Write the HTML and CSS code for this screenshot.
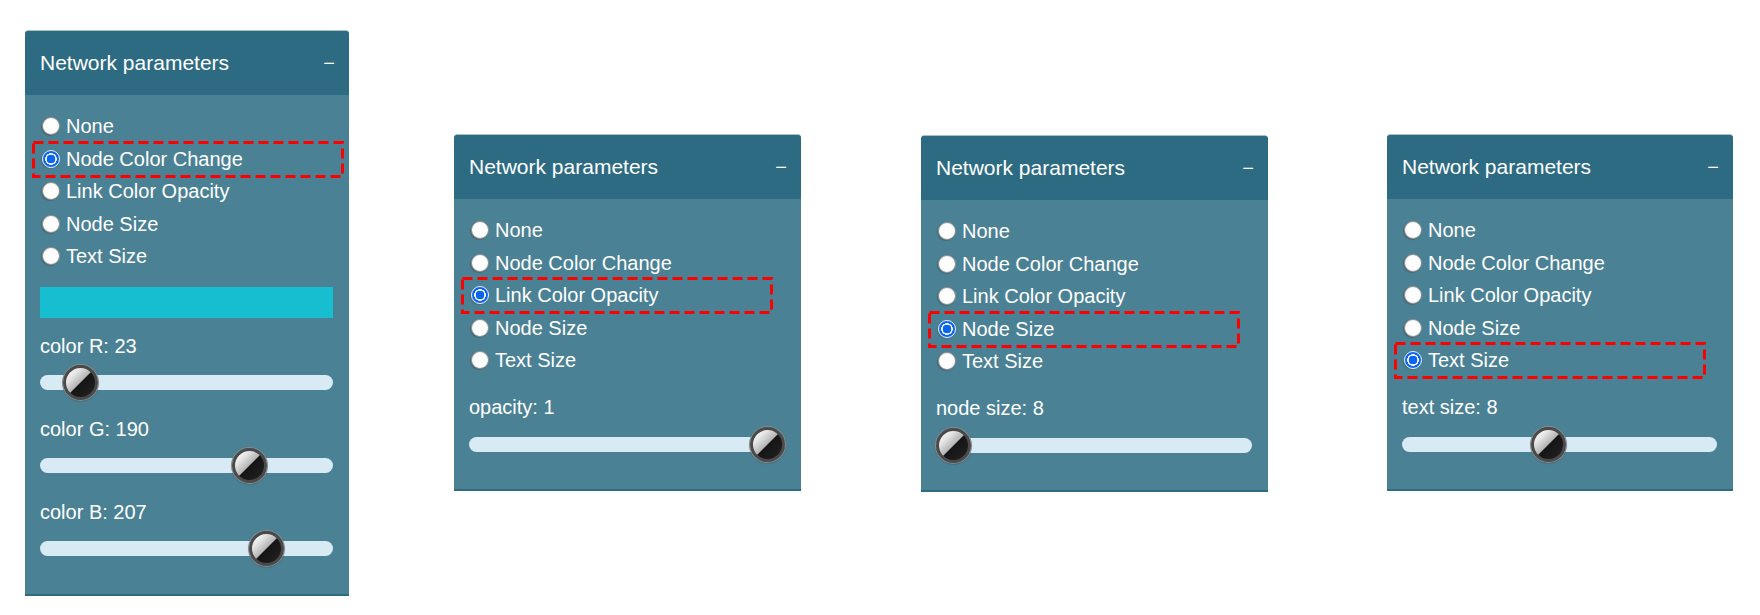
FILE: index.html
```html
<!DOCTYPE html>
<html lang="en">
<head>
<meta charset="utf-8">
<title>Network parameters</title>
<link rel="stylesheet" href="styles.css">
</head>
<body>
<div class="stage">

  <section class="panel panel-a">
    <header class="panel-head"><span class="title">Network parameters</span><span class="collapse">−</span></header>
    <div class="panel-body tall">
      <label class="opt"><input type="radio" name="m1"><span>None</span></label>
      <label class="opt sel"><input type="radio" name="m1" checked><span>Node Color Change</span><svg class="hl" viewBox="0 0 312 37" width="312" height="37"><rect x="1.5" y="1.5" width="309" height="34"/></svg></label>
      <label class="opt"><input type="radio" name="m1"><span>Link Color Opacity</span></label>
      <label class="opt"><input type="radio" name="m1"><span>Node Size</span></label>
      <label class="opt"><input type="radio" name="m1"><span>Text Size</span></label>
      <div class="swatch" style="background: rgb(23,190,207)"></div>
      <div class="group first">
        <div class="lbl">color R: 23</div>
        <input class="range" type="range" min="0" max="255" value="23">
      </div>
      <div class="group">
        <div class="lbl">color G: 190</div>
        <input class="range" type="range" min="0" max="255" value="190">
      </div>
      <div class="group">
        <div class="lbl">color B: 207</div>
        <input class="range" type="range" min="0" max="255" value="207">
      </div>
    </div>
  </section>

  <section class="panel panel-b">
    <header class="panel-head"><span class="title">Network parameters</span><span class="collapse">−</span></header>
    <div class="panel-body small">
      <label class="opt"><input type="radio" name="m2"><span>None</span></label>
      <label class="opt"><input type="radio" name="m2"><span>Node Color Change</span></label>
      <label class="opt sel"><input type="radio" name="m2" checked><span>Link Color Opacity</span><svg class="hl" viewBox="0 0 312 37" width="312" height="37"><rect x="1.5" y="1.5" width="309" height="34"/></svg></label>
      <label class="opt"><input type="radio" name="m2"><span>Node Size</span></label>
      <label class="opt"><input type="radio" name="m2"><span>Text Size</span></label>
      <div class="group single">
        <div class="lbl">opacity: 1</div>
        <input class="range" type="range" min="0" max="1" step="0.01" value="1">
      </div>
    </div>
  </section>

  <section class="panel panel-c">
    <header class="panel-head"><span class="title">Network parameters</span><span class="collapse">−</span></header>
    <div class="panel-body small">
      <label class="opt"><input type="radio" name="m3"><span>None</span></label>
      <label class="opt"><input type="radio" name="m3"><span>Node Color Change</span></label>
      <label class="opt"><input type="radio" name="m3"><span>Link Color Opacity</span></label>
      <label class="opt sel"><input type="radio" name="m3" checked><span>Node Size</span><svg class="hl" viewBox="0 0 312 37" width="312" height="37"><rect x="1.5" y="1.5" width="309" height="34"/></svg></label>
      <label class="opt"><input type="radio" name="m3"><span>Text Size</span></label>
      <div class="group single">
        <div class="lbl">node size: 8</div>
        <input class="range" type="range" min="8" max="30" value="8">
      </div>
    </div>
  </section>

  <section class="panel panel-d">
    <header class="panel-head"><span class="title">Network parameters</span><span class="collapse">−</span></header>
    <div class="panel-body small">
      <label class="opt"><input type="radio" name="m4"><span>None</span></label>
      <label class="opt"><input type="radio" name="m4"><span>Node Color Change</span></label>
      <label class="opt"><input type="radio" name="m4"><span>Link Color Opacity</span></label>
      <label class="opt"><input type="radio" name="m4"><span>Node Size</span></label>
      <label class="opt sel"><input type="radio" name="m4" checked><span>Text Size</span><svg class="hl" viewBox="0 0 312 37" width="312" height="37"><rect x="1.5" y="1.5" width="309" height="34"/></svg></label>
      <div class="group single">
        <div class="lbl">text size: 8</div>
        <input class="range" type="range" min="2" max="15" value="8">
      </div>
    </div>
  </section>

</div>
</body>
</html>
```

FILE: styles.css
```css
* { box-sizing: border-box; }

html, body {
  margin: 0;
  padding: 0;
  background: #ffffff;
}

body {
  width: 1760px;
  height: 615px;
  overflow: hidden;
  font-family: "Liberation Sans", Arial, sans-serif;
  color: #ffffff;
}

.stage {
  display: flex;
  align-items: flex-start;
}

.panel {
  background: #4b8194;
  border-radius: 4px 4px 0 0;
  border-top: 1px solid #a9c0c9;
  border-bottom: 2px solid #2f6c82;
}

.panel-a { width: 324px; margin-left: 25px; margin-top: 30px; }
.panel-b { width: 347px; margin-left: 105px; margin-top: 134px; }
.panel-c { width: 347px; margin-left: 120px; margin-top: 135px; }
.panel-d { width: 346px; margin-left: 119px; margin-top: 134px; }

.panel-head {
  height: 64px;
  background: #2d6b82;
  border-radius: 3px 3px 0 0;
  display: flex;
  align-items: center;
  justify-content: space-between;
  padding: 0 14px 0 15px;
}

.title {
  font-size: 21px;
  line-height: 24px;
}

.collapse {
  font-size: 20px;
  line-height: 24px;
}

.panel-body {
  padding: 15px 16px 27px 15px;
}

.panel-body.tall {
  padding-bottom: 28px;
}

.panel-body.small {
  padding-top: 15px;
}

.opt {
  position: relative;
  display: flex;
  align-items: center;
  height: 32.5px;
  font-size: 20px;
  line-height: 24px;
}

.opt input {
  appearance: none;
  -webkit-appearance: none;
  width: 18px;
  height: 18px;
  margin: 0 6px 0 2px;
  border-radius: 50%;
  background: #ffffff;
  border: 1px solid #8d8d8d;
  box-shadow: -1px 1px 1px rgba(60, 60, 60, 0.35);
  flex: none;
}

.opt input:checked {
  border: 1px solid #e8f0ff;
  background: radial-gradient(circle, #0a66f2 0 4.2px, #ffffff 4.6px 5.6px, #0a66f2 6px);
  box-shadow: -1px 1px 1px rgba(60, 60, 60, 0.25);
}

.hl {
  position: absolute;
  left: -8px;
  top: -2px;
  width: 312px;
  height: 37px;
  overflow: visible;
  pointer-events: none;
}

.hl rect {
  fill: none;
  stroke: #ff0000;
  stroke-width: 3;
  stroke-dasharray: 10 5;
}

.swatch {
  height: 31px;
  margin-top: 14px;
}

.group { margin-top: 17px; }
.group.first { margin-top: 16px; }
.group.single { margin-top: 18px; }

.lbl {
  font-size: 20px;
  line-height: 24px;
}

.range {
  -webkit-appearance: none;
  appearance: none;
  display: block;
  width: 100%;
  height: 35px;
  margin: 7px 0 0 0;
  padding: 0;
  background: transparent;
}

.group.single .range { margin-top: 8px; }

.range::-webkit-slider-runnable-track {
  height: 15px;
  border-radius: 8px;
  background: #d8ebf5;
}

.range::-webkit-slider-thumb {
  -webkit-appearance: none;
  appearance: none;
  width: 35px;
  height: 35px;
  margin-top: -10px;
  border-radius: 50%;
  border: 3px solid #4a4a4a;
  background: linear-gradient(135deg, #ffffff 0%, #e6e6e6 25%, #b4b4b4 49%, #151515 51%, #222222 100%);
  box-shadow: 0 0 0 1px #8a8a8a, 0 1px 2px rgba(0, 0, 0, 0.4);
}
```
